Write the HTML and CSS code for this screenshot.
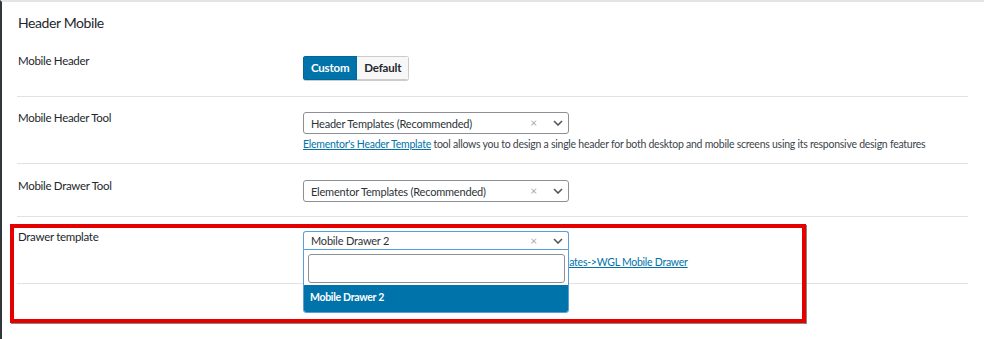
FILE: index.html
```html
<!DOCTYPE html>
<html lang="en">
<head>
  <meta charset="UTF-8">
  <title>Header Mobile</title>
  <link rel="stylesheet" href="styles.css">
</head>
<body>
  <div class="panel">
    <h3 class="titulo">Header Mobile</h3>

    <div class="fila fila-1">
      <div class="etiqueta">Mobile Header</div>
      <div class="campo">
        <div class="botones">
          <span class="btn activo">Custom</span>
          <span class="btn">Default</span>
        </div>
      </div>
    </div>

    <div class="fila fila-2">
      <div class="etiqueta">Mobile Header Tool</div>
      <div class="campo">
        <div class="select">
          <span class="valor">Header Templates (Recommended)</span>
          <span class="limpiar">×</span>
          <svg class="flecha" width="10" height="6" viewBox="0 0 10 6"><path d="M1 1l4 4 4-4" fill="none" stroke="#50575e" stroke-width="1.6"/></svg>
        </div>
        <p class="desc"><a href="#">Elementor's Header Template</a> tool allows you to design a single header for both desktop and mobile screens using its responsive design features</p>
      </div>
    </div>

    <div class="fila fila-3">
      <div class="etiqueta">Mobile Drawer Tool</div>
      <div class="campo">
        <div class="select">
          <span class="valor">Elementor Templates (Recommended)</span>
          <span class="limpiar">×</span>
          <svg class="flecha" width="10" height="6" viewBox="0 0 10 6"><path d="M1 1l4 4 4-4" fill="none" stroke="#50575e" stroke-width="1.6"/></svg>
        </div>
      </div>
    </div>

    <div class="fila marcada">
      <div class="etiqueta">Drawer template</div>
      <div class="campo">
        <div class="select abierto">
          <span class="valor">Mobile Drawer 2</span>
          <span class="limpiar">×</span>
          <svg class="flecha" width="10" height="6" viewBox="0 0 10 6"><path d="M1 1l4 4 4-4" fill="none" stroke="#50575e" stroke-width="1.6"/></svg>
          <div class="desplegable">
            <div class="buscar"><input type="text"></div>
            <div class="opcion">Mobile Drawer 2</div>
          </div>
        </div>
        <p class="desc"><a href="#">Manage your mobile drawer templates in: Dashboard->Templates->WGL Mobile Drawer</a></p>
      </div>
      <div class="resaltado"></div>
    </div>
  </div>
</body>
</html>
```

FILE: styles.css
```css
* {
  margin: 0;
  padding: 0;
  box-sizing: border-box;
}

body {
  background: #fff;
  font-family: 'Segoe UI', Lato, sans-serif;
  color: #23282d;
  border-left: 2px solid #32373c;
  border-top: 2px solid #e2e4e7;
  height: 339px;
  overflow: hidden;
  position: relative;
}

/* franja azul arriba a la izquierda */
body::before {
  content: "";
  position: absolute;
  left: -2px;
  top: -2px;
  width: 2px;
  height: 25px;
  background: #0073aa;
}

.panel {
  padding: 11px 16px 0 15px;
}

.titulo {
  font-size: 14px;
  font-weight: 400;
  letter-spacing: -0.4px;
  line-height: 20px;
  padding-left: 1px;
  margin-bottom: 22px;
}

.fila {
  display: flex;
  border-bottom: 1px solid #e2e2e2;
  position: relative;
}

.fila-1 { padding: 0 0 16px; }
.fila-2 { padding: 15px 0 11px; }
.fila-3 { padding: 16px 0 14px; }

.etiqueta {
  width: 286px;
  flex-shrink: 0;
  font-size: 11.5px;
  letter-spacing: -0.3px;
  line-height: 17px;
  padding-left: 1px;
  margin-top: -3px;
}

.campo {
  flex: 1;
}

.botones {
  display: inline-flex;
  border-radius: 3px;
  overflow: hidden;
  box-shadow: 0 1px 0 #ccc;
  margin-top: 1px;
}

.btn {
  font-size: 11.5px;
  font-weight: 700;
  letter-spacing: -0.2px;
  height: 24px;
  line-height: 22px;
  padding: 0 7px;
  background: #f7f7f7;
  border: 1px solid #ccc;
  border-left: none;
  color: #23282d;
}

.btn.activo {
  background: #0073aa;
  border: 1px solid #006799;
  color: #fff;
}

.select {
  position: relative;
  width: 266px;
  height: 22px;
  border: 1px solid #8c8f94;
  border-radius: 3px;
  display: flex;
  align-items: center;
  padding: 0 5px 0 7px;
  font-size: 11px;
  letter-spacing: -0.2px;
  color: #2c3338;
}

.valor {
  flex: 1;
  white-space: nowrap;
}

.limpiar {
  color: #a7aaad;
  font-size: 12px;
  margin-right: 16px;
  line-height: 1;
}

.flecha {
  display: block;
}

.desc {
  font-size: 10.5px;
  letter-spacing: -0.25px;
  line-height: 15px;
  margin-top: 3px;
  color: #3c434a;
  white-space: nowrap;
}

.desc a {
  color: #0073aa;
}

.select.abierto {
  border-color: #5b9dd9;
  border-bottom-color: #fff;
  border-radius: 3px 3px 0 0;
  height: 19px;
  z-index: 5;
}

.desplegable {
  position: absolute;
  left: -1px;
  top: 17px;
  width: 266px;
  background: #fff;
  border: 1px solid #5b9dd9;
  border-radius: 0 0 3px 3px;
  overflow: hidden;
}

.buscar {
  padding: 4px 3px 2px 4px;
}

.buscar input {
  display: block;
  width: 100%;
  height: 29px;
  border: 1px solid #8c8f94;
  border-radius: 3px;
}

.opcion {
  background: #0073aa;
  color: #fff;
  font-size: 10.5px;
  font-weight: 700;
  letter-spacing: -0.3px;
  height: 27px;
  line-height: 25px;
  padding-left: 6px;
}

.fila.marcada {
  padding: 14px 0 13px;
}

.marcada .desc {
  margin-top: 5px;
}

/* recuadro rojo de aviso */
.resaltado {
  position: absolute;
  left: -7px;
  top: 7px;
  width: 796px;
  height: 99px;
  border: 4px solid #e50000;
  box-shadow: 1px 1px 0 #888;
  pointer-events: none;
}
```
